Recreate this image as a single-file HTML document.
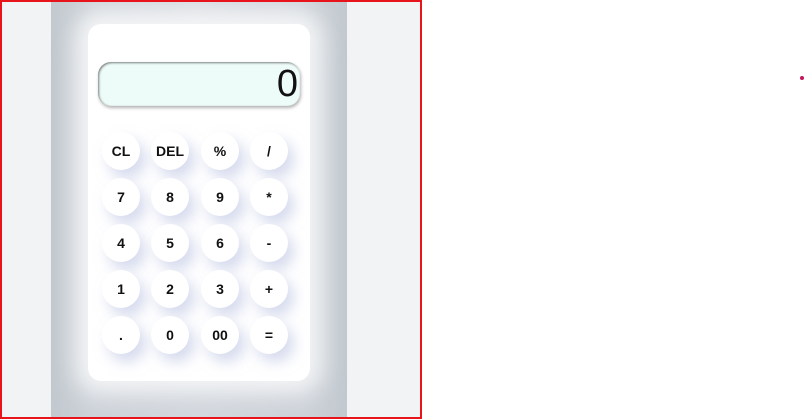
<!DOCTYPE html>
<html><head><style>
html,body{margin:0;padding:0;width:806px;height:419px;background:#fff;overflow:hidden;font-family:"Liberation Sans",Arial,sans-serif}
.frame{position:absolute;left:0;top:0;width:418px;height:415px;border:2px solid #e8141c;background:#f2f3f5;overflow:hidden}
.col{position:absolute;left:49px;top:0;width:296px;height:420px;background:linear-gradient(90deg,#c2c9cf 0%,#cfd4da 15%,#d6dae0 50%,#cfd4da 85%,#c2c9cf 100%)}
.card{position:absolute;left:86px;top:22px;width:222px;height:357px;background:#fff;border-radius:13px;box-shadow:0 0 22px 14px rgba(255,255,255,0.75),0 18px 30px 6px rgba(200,206,214,0.8)}
.disp{position:absolute;left:10px;top:38px;width:202px;height:44px;border-radius:13px;background:#eefcf9;box-shadow:inset 1px 1px 2px rgba(0,0,0,0.5),1px 2px 3px rgba(0,0,0,0.3);font-size:38px;text-align:right;line-height:44px;color:#111;box-sizing:border-box;padding-right:2px}
.b{position:absolute;width:38px;height:38px;border-radius:50%;background:#fff;box-shadow:6px 8px 14px rgba(185,194,225,0.6);font-weight:bold;font-size:14px;color:#111;text-align:center;line-height:38px}
.dot{position:absolute;left:800px;top:76px;width:4px;height:4px;border-radius:50%;background:#c2185b}
</style></head><body>
<div class="frame"><div class="col"></div>
<div class="card"><div class="disp">0</div>
<div class="b" style="left:14px;top:108px">CL</div><div class="b" style="left:63px;top:108px">DEL</div><div class="b" style="left:113px;top:108px">%</div><div class="b" style="left:162px;top:108px">/</div>
<div class="b" style="left:14px;top:154px">7</div><div class="b" style="left:63px;top:154px">8</div><div class="b" style="left:113px;top:154px">9</div><div class="b" style="left:162px;top:154px">*</div>
<div class="b" style="left:14px;top:200px">4</div><div class="b" style="left:63px;top:200px">5</div><div class="b" style="left:113px;top:200px">6</div><div class="b" style="left:162px;top:200px">-</div>
<div class="b" style="left:14px;top:246px">1</div><div class="b" style="left:63px;top:246px">2</div><div class="b" style="left:113px;top:246px">3</div><div class="b" style="left:162px;top:246px">+</div>
<div class="b" style="left:14px;top:292px">.</div><div class="b" style="left:63px;top:292px">0</div><div class="b" style="left:113px;top:292px">00</div><div class="b" style="left:162px;top:292px">=</div>
</div></div>
<div class="dot"></div>
</body></html>
